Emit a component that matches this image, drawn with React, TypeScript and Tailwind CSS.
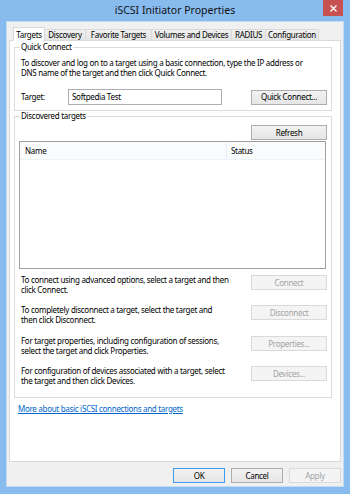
const tabs = [
  { t: 'Discovery', w: 'w-[41px]' },
  { t: 'Favorite Targets', w: 'w-[66px]' },
  { t: 'Volumes and Devices', w: 'w-[80px]' },
  { t: 'RADIUS', w: 'w-[34px]' },
  { t: 'Configuration', w: 'w-[53px]' },
];

const actions = [
  { text: ['To connect using advanced options, select a target and then', 'click Connect.'], label: 'Connect', mt: 'mt-[6px]' },
  { text: ['To completely disconnect a target, select the target and', 'then click Disconnect.'], label: 'Disconnect', mt: 'mt-[10px]' },
  { text: ['For target properties, including configuration of sessions,', 'select the target and click Properties.'], label: 'Properties...', mt: 'mt-[11px]' },
  { text: ['For configuration of devices associated with a target, select', 'the target and then click Devices.'], label: 'Devices...', mt: 'mt-[10px]' },
];

const Button = ({ label, disabled, width = 'w-[76px]', primary }: { label: string; disabled?: boolean; width?: string; primary?: boolean }) => (
  <div
    className={`${width} h-[15px] flex items-center justify-center border leading-none ${
      disabled
        ? 'border-[#d9d9d9] bg-[#f4f4f4] text-[#a3a3a3]'
        : primary
        ? 'border-[#3c9af5] bg-gradient-to-b from-[#f2f2f2] to-[#e6e6e6] text-black'
        : 'border-[#adadad] bg-gradient-to-b from-[#f2f2f2] to-[#e6e6e6] text-black'
    }`}
  >
    {label}
  </div>
);

const GroupLabel = ({ text }: { text: string }) => (
  <span className="absolute -top-[6px] left-[5px] bg-white px-[1px] leading-[10px] text-black whitespace-nowrap">{text}</span>
);

export default function App() {
  return (
    <div
      className="w-[350px] h-[494px] bg-[#88bbee] flex flex-col text-black"
      style={{ fontFamily: '"Noto Sans", "Liberation Sans", sans-serif' }}
    >
      {/* title bar */}
      <div className="relative h-[21px] flex items-center justify-center">
        <span className="text-[10.5px] leading-none text-[#111]">iSCSI Initiator Properties</span>
        <div className="absolute right-[7px] top-0 w-[20px] h-[16px] bg-[#c75050] flex items-center justify-center">
          <svg width="7" height="7" viewBox="0 0 7 7">
            <path d="M0.5 0.5L6.5 6.5M6.5 0.5L0.5 6.5" stroke="white" strokeWidth="1.4" />
          </svg>
        </div>
      </div>

      {/* client */}
      <div className="flex-1 mx-[6px] mb-[7px] border border-[#c3daf3] bg-[#f0f0f0] px-[2px] pt-[5px] flex flex-col text-[8px] tracking-[-0.3px] whitespace-nowrap">
        {/* tabs */}
        <div className="flex items-end pl-[4px] h-[13px]">
          <div className="relative z-10 -mb-px h-[14px] w-[32px] bg-white border border-b-0 border-[#d9d9d9] flex items-center justify-center leading-none">
            Targets
          </div>
          {tabs.map((t) => (
            <div
              key={t.t}
              className={`${t.w} h-[11px] border border-l-0 border-b-0 border-[#d9d9d9] bg-gradient-to-b from-[#f0f0f0] to-[#e5e5e5] flex items-center justify-center leading-none`}
            >
              {t.t}
            </div>
          ))}
        </div>

        {/* panel */}
        <div className="h-[422px] bg-white border border-[#d9d9d9] flex flex-col pl-[4px] pr-[8px]">
          {/* Quick Connect */}
          <div className="relative mt-[6px] h-[64px] border border-[#dcdcdc] pl-[6px] pr-[4px] pt-[10px]">
            <GroupLabel text="Quick Connect" />
            <p className="leading-[10px]">
              To discover and log on to a target using a basic connection, type the IP address or
              <br />
              DNS name of the target and then click Quick Connect.
            </p>
            <div className="mt-[11px] flex items-center">
              <span className="w-[47px] leading-none">Target:</span>
              <div className="w-[154px] h-[16px] border border-[#abadb3] bg-white px-[3px] flex items-center leading-none">
                Softpedia Test
              </div>
              <div className="ml-auto">
                <Button label="Quick Connect..." />
              </div>
            </div>
          </div>

          {/* Discovered targets */}
          <div className="relative mt-[5px] h-[282px] border border-[#dcdcdc] flex flex-col">
            <GroupLabel text="Discovered targets" />
            <div className="mt-[8px] mr-[4px] self-end">
              <Button label="Refresh" />
            </div>
            <div className="mt-px ml-[4px] mr-[5px] h-[128px] border border-[#a0a0a0] bg-white">
              <div className="h-[18px] flex border-b border-[#eef2f7] bg-[#fafbfd] leading-none">
                <div className="w-[207px] border-r border-[#e8edf3] pl-[5px] flex items-center">Name</div>
                <div className="flex-1 pl-[4px] flex items-center">Status</div>
              </div>
            </div>
            {actions.map((a) => (
              <div key={a.label} className={`${a.mt} flex items-start pl-[6px] pr-[4px]`}>
                <p className="leading-[10px]">
                  {a.text[0]}
                  <br />
                  {a.text[1]}
                </p>
                <div className="ml-auto">
                  <Button label={a.label} disabled />
                </div>
              </div>
            ))}
          </div>

          <a className="mt-[6px] ml-[4px] self-start leading-[10px] text-[#0066cc] underline">
            More about basic iSCSI connections and targets
          </a>
        </div>

        {/* bottom buttons */}
        <div className="mt-[6px] flex justify-end gap-[6px]">
          <Button label="OK" width="w-[52px]" primary />
          <Button label="Cancel" width="w-[52px]" />
          <Button label="Apply" width="w-[52px]" disabled />
        </div>
      </div>
    </div>
  );
}
